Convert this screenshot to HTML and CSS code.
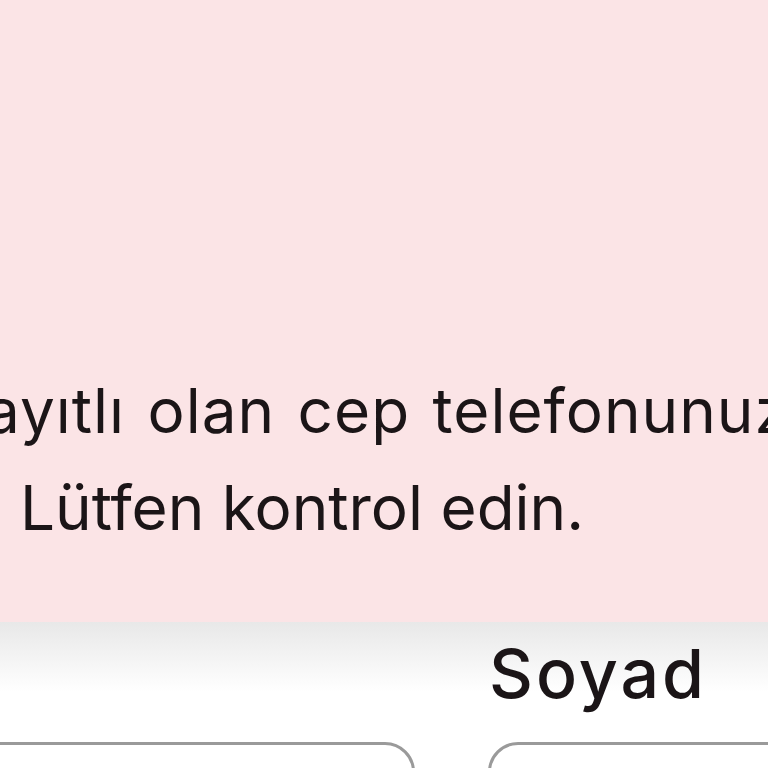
FILE: index.html
```
<!DOCTYPE html>
<html lang="tr">
<head>
  <meta charset="UTF-8" />
  <meta name="viewport" content="width=device-width, initial-scale=1.0"/>
  <title>Bilgi Güncelleme</title>
  <link rel="stylesheet" href="styles.css">
</head>
<body>

<div class="notice">
  <p class="line first">kayıtlı olan cep telefonunuza</p>
  <p class="line second">Lütfen kontrol edin.</p>
</div>

<div class="form-card">
  <div class="form-row">
    <div class="field">
      <label>Ad</label>
      <input type="text" />
    </div>
    <div class="field">
      <label>Soyad</label>
      <input type="text" />
    </div>
  </div>
</div>

</body>
</html>
```

FILE: styles.css
```
body {
  margin: 0;
  font-family: "Inter", "Noto Sans", sans-serif;
  color: #1b1517;
  background: #fff;
  overflow: hidden;
}
.notice {
  background: #fbe4e6;
  height: 622px;
  padding-top: 362px;
  box-sizing: border-box;
  overflow: hidden;
}
.line {
  margin: 0;
  font-size: 62px;
  line-height: 97px;
  white-space: nowrap;
}
.line.first {
  margin-left: -50px;
  letter-spacing: 1px;
  word-spacing: 4px;
}
.line.second {
  margin-left: 20px;
}
.form-card {
  background: linear-gradient(#e8e8e8, #fff 70px);
  height: 146px;
  overflow: hidden;
}
.form-row {
  display: grid;
  grid-template-columns: 560px 560px;
  gap: 73px;
  margin-left: -145px;
  padding-top: 11px;
}
.field label {
  display: block;
  font-size: 68px;
  font-weight: 500;
  letter-spacing: 3px;
  line-height: 80px;
  margin-left: 1px;
}
.field input {
  display: block;
  width: 100%;
  height: 90px;
  margin-top: 29px;
  box-sizing: border-box;
  border: 3px solid #9a9a9a;
  border-radius: 30px;
  background: #fff;
}
```
